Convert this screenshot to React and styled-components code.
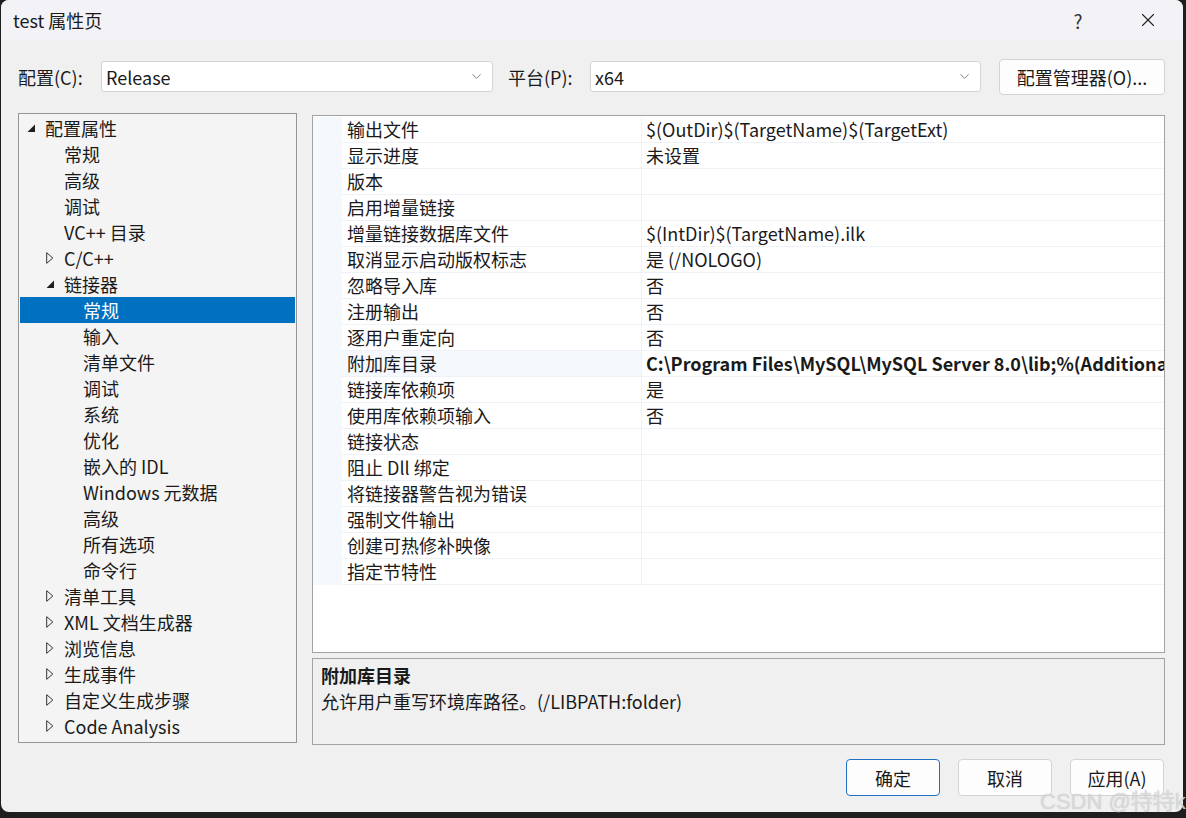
import React from 'react';
import styled, { createGlobalStyle } from 'styled-components';
import { ChevronDown, X } from 'lucide-react';

const Global = createGlobalStyle`
    html, body {
        margin: 0;
        padding: 0;
        background: #1e1e1e;
        overflow: hidden;
    }
    body {
        font-family: "Noto Sans CJK SC", "Noto Sans", sans-serif;
        color: #1a1a1a;
    }
`;

const Page = styled.div`
    position: relative;
    width: 1186px;
    height: 818px;
    overflow: hidden;
`;

const Window = styled.div`
    margin-left: 1px;
    width: 1182px;
    height: 812px;
    border-radius: 8px;
    background: #f0f0f0;
    display: flex;
    flex-direction: column;
    overflow: hidden;
`;

const TitleBar = styled.div`
    height: 40px;
    flex-shrink: 0;
    background: #f3f2f7;
    display: flex;
    align-items: center;
    padding-left: 12px;
    padding-right: 24px;
`;

const Title = styled.div`
    flex-grow: 1;
    font-size: 18px;
`;

const HelpMark = styled.div`
    font-size: 19px;
    color: #333;
    width: 24px;
    text-align: center;
    margin-right: 47px;
`;

const Toolbar = styled.div`
    margin-top: 19px;
    height: 35px;
    display: flex;
    align-items: center;
    padding-left: 17px;
`;

const Label = styled.div`
    width: ${(p) => p.w}px;
    font-size: 18px;
    flex-shrink: 0;
`;

const Select = styled.div`
    width: ${(p) => p.w}px;
    height: 31px;
    box-sizing: border-box;
    background: #ffffff;
    border: 1px solid #d4d4d4;
    border-radius: 3px;
    display: flex;
    align-items: center;
    padding-left: 4px;
    padding-right: 8px;
    font-size: 18px;
    margin-right: ${(p) => p.mr || 0}px;
    flex-shrink: 0;
`;

const SelectText = styled.span`
    flex-grow: 1;
`;

const Button = styled.div`
    width: ${(p) => p.w || 94}px;
    height: ${(p) => p.h || 37}px;
    box-sizing: border-box;
    background: #fdfdfd;
    border: 1px solid ${(p) => (p.primary ? '#1f6fc5' : '#d3d3d3')};
    border-radius: 4px;
    display: flex;
    align-items: center;
    justify-content: center;
    font-size: 18px;
    flex-shrink: 0;
    margin-left: ${(p) => p.ml || 0}px;
`;

const Main = styled.div`
    margin-top: 19px;
    display: flex;
    align-items: flex-start;
    padding-left: 17px;
    gap: 15px;
`;

const Tree = styled.div`
    width: 279px;
    height: 630px;
    box-sizing: border-box;
    border: 1px solid #959595;
    background: #f4f4f4;
    padding: 1px 1px;
    display: flex;
    flex-direction: column;
`;

const TreeRow = styled.div`
    height: 26px;
    flex-shrink: 0;
    display: flex;
    align-items: center;
    padding-left: ${(p) => 7 + p.level * 19}px;
    font-size: 18px;
    background: ${(p) => (p.selected ? '#0070c0' : 'transparent')};
    color: ${(p) => (p.selected ? '#ffffff' : '#1a1a1a')};
`;

const Arrow = styled.span`
    width: 18px;
    flex-shrink: 0;
    display: flex;
    align-items: center;
`;

const RightCol = styled.div`
    width: 853px;
    display: flex;
    flex-direction: column;
    gap: 5px;
    margin-top: 2px;
`;

const Grid = styled.div`
    height: 538px;
    box-sizing: border-box;
    border: 1px solid #a3a3a3;
    background: #ffffff;
    padding-top: 1px;
    overflow: hidden;
`;

const GridRow = styled.div`
    display: grid;
    grid-template-columns: 29px 300px 1fr;
    height: 26px;
`;

const Gutter = styled.div`
    background: #f5f8fc;
`;

const NameCell = styled.div`
    box-sizing: border-box;
    border-bottom: 1px solid #eef1f6;
    border-right: 1px solid #eef1f6;
    background: ${(p) => (p.selected ? '#f5f8fc' : '#ffffff')};
    padding-left: 5px;
    font-size: 18px;
    line-height: 25px;
    white-space: nowrap;
`;

const ValueCell = styled.div`
    box-sizing: border-box;
    border-bottom: 1px solid #eef1f6;
    padding-left: 4px;
    font-size: 18px;
    line-height: 25px;
    white-space: nowrap;
    overflow: hidden;
    font-weight: ${(p) => (p.bold ? 700 : 400)};
`;

const Desc = styled.div`
    height: 87px;
    box-sizing: border-box;
    border: 1px solid #a3a3a3;
    background: #f0f0f0;
    padding: 3px 8px;
    font-size: 18px;
`;

const DescTitle = styled.div`
    font-weight: 700;
    line-height: 26px;
`;

const DescText = styled.div`
    line-height: 26px;
`;

const Footer = styled.div`
    margin-top: 14px;
    display: flex;
    justify-content: flex-end;
    padding-right: 19px;
`;

const Watermark = styled.div`
    position: absolute;
    left: 1040px;
    top: 783px;
    font-family: "Liberation Sans", "Noto Sans CJK SC", sans-serif;
    font-size: 22px;
    color: rgba(222, 222, 222, 0.8);
    text-shadow: 0 0 1px rgba(150, 150, 150, 0.5);
    white-space: nowrap;
`;

const Expanded = () => (
    <svg width="9" height="9" viewBox="0 0 9 9">
        <polygon points="8,0.5 8,8 0.5,8" fill="#1e1e1e" />
    </svg>
);

const Collapsed = () => (
    <svg width="8" height="12" viewBox="0 0 8 12">
        <polygon points="0.7,0.7 6.8,6 0.7,11.3" fill="none" stroke="#333" strokeWidth="1" />
    </svg>
);

const treeItems = [
    { label: '配置属性', level: 0, state: 'open' },
    { label: '常规', level: 1 },
    { label: '高级', level: 1 },
    { label: '调试', level: 1 },
    { label: 'VC++ 目录', level: 1 },
    { label: 'C/C++', level: 1, state: 'closed' },
    { label: '链接器', level: 1, state: 'open' },
    { label: '常规', level: 2, selected: true },
    { label: '输入', level: 2 },
    { label: '清单文件', level: 2 },
    { label: '调试', level: 2 },
    { label: '系统', level: 2 },
    { label: '优化', level: 2 },
    { label: '嵌入的 IDL', level: 2 },
    { label: 'Windows 元数据', level: 2 },
    { label: '高级', level: 2 },
    { label: '所有选项', level: 2 },
    { label: '命令行', level: 2 },
    { label: '清单工具', level: 1, state: 'closed' },
    { label: 'XML 文档生成器', level: 1, state: 'closed' },
    { label: '浏览信息', level: 1, state: 'closed' },
    { label: '生成事件', level: 1, state: 'closed' },
    { label: '自定义生成步骤', level: 1, state: 'closed' },
    { label: 'Code Analysis', level: 1, state: 'closed' },
];

const props = [
    ['输出文件', '$(OutDir)$(TargetName)$(TargetExt)'],
    ['显示进度', '未设置'],
    ['版本', ''],
    ['启用增量链接', ''],
    ['增量链接数据库文件', '$(IntDir)$(TargetName).ilk'],
    ['取消显示启动版权标志', '是 (/NOLOGO)'],
    ['忽略导入库', '否'],
    ['注册输出', '否'],
    ['逐用户重定向', '否'],
    ['附加库目录', 'C:\\Program Files\\MySQL\\MySQL Server 8.0\\lib;%(AdditionalLibraryDirectories)', true],
    ['链接库依赖项', '是'],
    ['使用库依赖项输入', '否'],
    ['链接状态', ''],
    ['阻止 Dll 绑定', ''],
    ['将链接器警告视为错误', ''],
    ['强制文件输出', ''],
    ['创建可热修补映像', ''],
    ['指定节特性', ''],
];

const App = () => {
    return (
        <Page>
            <Global />
            <Window>
                <TitleBar>
                    <Title>test 属性页</Title>
                    <HelpMark>?</HelpMark>
                    <X size={22} strokeWidth={1.2} color="#222" />
                </TitleBar>
                <Toolbar>
                    <Label w={83}>配置(C):</Label>
                    <Select w={392} mr={15}>
                        <SelectText>Release</SelectText>
                        <ChevronDown size={15} strokeWidth={1.3} color="#666" />
                    </Select>
                    <Label w={82}>平台(P):</Label>
                    <Select w={391}>
                        <SelectText>x64</SelectText>
                        <ChevronDown size={15} strokeWidth={1.3} color="#666" />
                    </Select>
                    <Button w={166} h={36} ml={18}>配置管理器(O)...</Button>
                </Toolbar>
                <Main>
                    <Tree>
                        {treeItems.map((item, i) => (
                            <TreeRow key={i} level={item.level} selected={item.selected}>
                                <Arrow>
                                    {item.state === 'open' && <Expanded />}
                                    {item.state === 'closed' && <Collapsed />}
                                </Arrow>
                                {item.label}
                            </TreeRow>
                        ))}
                    </Tree>
                    <RightCol>
                        <Grid>
                            {props.map(([name, value, bold], i) => (
                                <GridRow key={i}>
                                    <Gutter />
                                    <NameCell selected={bold}>{name}</NameCell>
                                    <ValueCell bold={bold}>{value}</ValueCell>
                                </GridRow>
                            ))}
                        </Grid>
                        <Desc>
                            <DescTitle>附加库目录</DescTitle>
                            <DescText>允许用户重写环境库路径。(/LIBPATH:folder)</DescText>
                        </Desc>
                    </RightCol>
                </Main>
                <Footer>
                    <Button primary>确定</Button>
                    <Button ml={18}>取消</Button>
                    <Button ml={18}>应用(A)</Button>
                </Footer>
            </Window>
            <Watermark>CSDN @特特k</Watermark>
        </Page>
    );
};

export default App;
